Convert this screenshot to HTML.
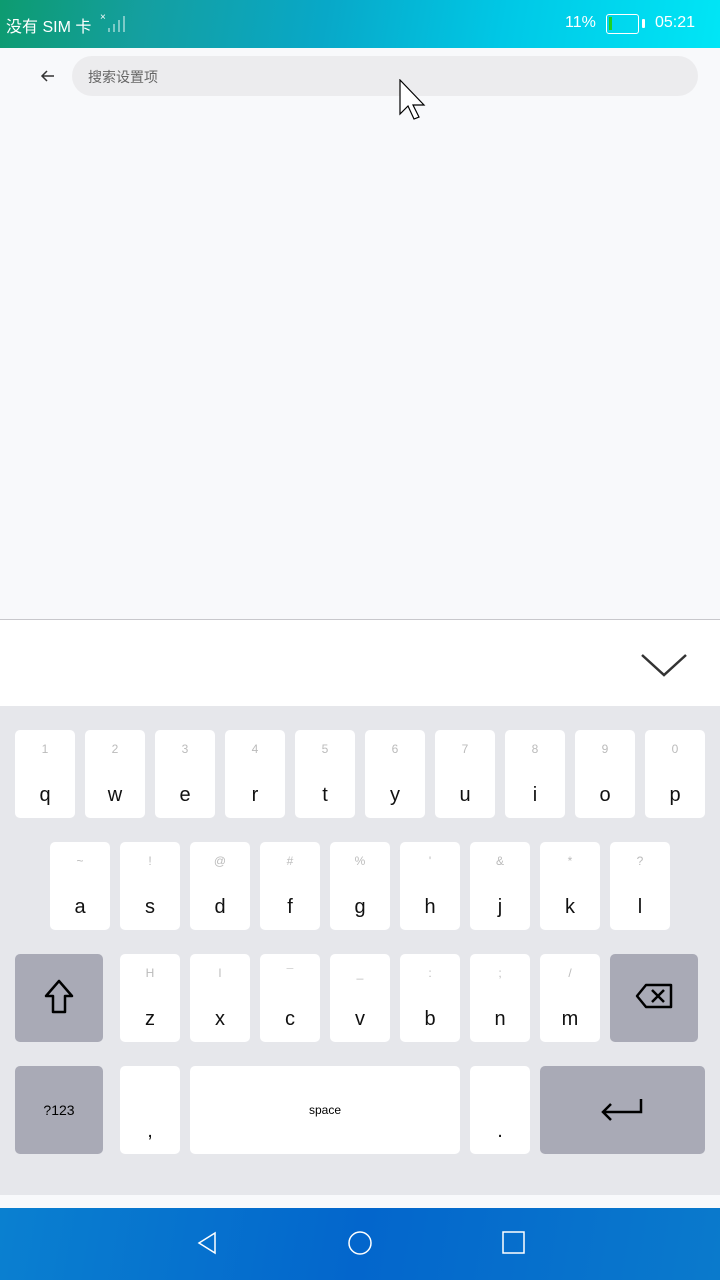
<!DOCTYPE html><html><head><meta charset="utf-8"><style>
*{margin:0;padding:0;box-sizing:border-box}
body{width:720px;height:1280px;position:relative;overflow:hidden;background:#f8f9fb;font-family:"Liberation Sans","Noto Sans CJK SC",sans-serif}
.a{position:absolute}
.k{position:absolute;background:#fff;border-radius:5px;width:60px;height:88px;text-align:center}
.k .s{position:absolute;top:12px;left:0;right:0;font-size:12px;color:#bbb}
.k .m{position:absolute;top:54px;left:0;right:0;font-size:20px;color:#111}
.g{background:#a9aab6}
</style></head><body>
<div class="a" style="left:0;top:0;width:720px;height:48px;background:linear-gradient(100deg,#0d9b70 0%,#149fa0 20%,#08a8c8 45%,#00c8e6 70%,#00e6f6 100%)"></div>
<div class="a" style="left:6px;top:13px;color:#fff;font-size:16px">没有 SIM 卡</div>
<div class="a" style="left:100px;top:12px;color:#fff;font-size:10px">×</div>
<svg class="a" style="left:106px;top:14px" width="22" height="20"><g fill="rgba(255,255,255,.45)"><rect x="2" y="14" width="2" height="4"/><rect x="7" y="10" width="2" height="8"/><rect x="12" y="6" width="2" height="12"/><rect x="17" y="2" width="2" height="16"/></g></svg>
<div class="a" style="left:565px;top:14px;color:#fff;font-size:16px">11%</div>
<div class="a" style="left:606px;top:14px;width:33px;height:20px;border:1.5px solid #fff;border-radius:3px"><div style="margin:2px;width:3px;height:13px;background:#1fd21f"></div></div>
<div class="a" style="left:642px;top:19px;width:3px;height:9px;background:#fff;border-radius:1px"></div>
<div class="a" style="left:655px;top:14px;color:#fff;font-size:16px">05:21</div>
<svg class="a" style="left:40px;top:68px" width="16" height="16"><path d="M14 8H2M7 3L2 8l5 5" stroke="#333" stroke-width="1.5" fill="none"/></svg>
<div class="a" style="left:72px;top:56px;width:626px;height:40px;border-radius:20px;background:#ececee"></div>
<div class="a" style="left:88px;top:67px;font-size:14px;color:#666">搜索设置项</div>
<svg class="a" style="left:399px;top:79px" width="30" height="44"><path d="M1 1v34l8-8 6 13 5-2-6-12h11z" fill="#fff" stroke="#000" stroke-width="1.2"/></svg>
<div class="a" style="left:0;top:619px;width:720px;height:1px;background:#c8c8cc"></div>
<div class="a" style="left:0;top:620px;width:720px;height:86px;background:#fff"></div>
<svg class="a" style="left:640px;top:652px" width="48" height="26"><path d="M2 3l22 20 22-20" stroke="#333" stroke-width="2.5" fill="none"/></svg>
<div class="a" style="left:0;top:706px;width:720px;height:489px;background:#e6e7eb"></div>
<div id="kb"></div>
<div class="a" style="left:0;top:1208px;width:720px;height:72px;background:linear-gradient(100deg,#0a80d0,#0366cc 50%,#0a7acc)"></div>
<svg class="a" style="left:190px;top:1225px" width="350" height="38"><path d="M25 8L9 18l16 10z" fill="none" stroke="#fff" stroke-width="1.5"/><circle cx="170" cy="18" r="11" fill="none" stroke="#fff" stroke-width="1.5"/><rect x="313" y="7" width="21" height="21" fill="none" stroke="#fff" stroke-width="1.5"/></svg>
<script>
var h='';
function k(x,y,s,m,w,cls,extra){h+='<div class="k '+(cls||'')+'" style="left:'+x+'px;top:'+y+'px;'+(w?'width:'+w+'px;':'')+'"><div class="s">'+(s||'')+'</div><div class="m">'+(m||'')+'</div>'+(extra||'')+'</div>';}
var r1="qwertyuiop",n1="1234567890";for(var i=0;i<10;i++)k(15+70*i,730,n1[i],r1[i]);
var r2="asdfghjkl",n2=["~","!","@","#","%","'","&amp;","*","?"];for(i=0;i<9;i++)k(50+70*i,842,n2[i],r2[i]);
var r3="zxcvbnm",n3=["H","l","¯","_",":",";","/"];for(i=0;i<7;i++)k(120+70*i,954,n3[i],r3[i]);
k(15,954,'','',88,'g','<svg style="position:absolute;left:27px;top:24px" width="34" height="40"><path d="M17 3L4 18h7v16h12V18h7z" fill="none" stroke="#000" stroke-width="2.5" stroke-linejoin="round"/></svg>');
k(610,954,'','',88,'g','<svg style="position:absolute;left:24px;top:28px" width="42" height="30"><path d="M12 3h25v22H12L3 14z" fill="none" stroke="#000" stroke-width="2.5" stroke-linejoin="round"/><path d="M18 8l12 12M30 8L18 20" stroke="#000" stroke-width="2.5"/></svg>');
k(15,1066,'','',88,'g','<div style="position:absolute;top:36px;left:0;right:0;font-size:14px">?123</div>');
k(120,1066,'',',');
k(190,1066,'','',270,'','<div style="position:absolute;top:37px;left:0;right:0;font-size:12px">space</div>');
k(470,1066,'','.');
k(540,1066,'','',165,'g','<svg style="position:absolute;left:58px;top:30px" width="48" height="30"><path d="M43 3v13H5M13 8L5 16l8 8" fill="none" stroke="#000" stroke-width="2.5"/></svg>');
document.getElementById('kb').outerHTML=h;
</script>
</body></html>
